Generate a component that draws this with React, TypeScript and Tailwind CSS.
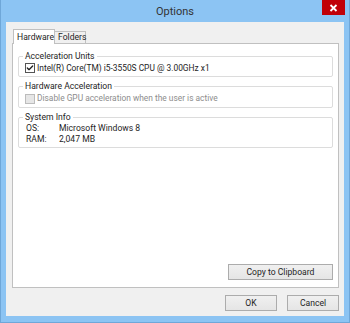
import { Check } from "lucide-react";

const font = { fontFamily: 'Roboto, "Open Sans", sans-serif' };

function GroupBox({ title, children }: { title: string; children: React.ReactNode }) {
  return (
    <fieldset className="rounded-[2px] border border-[#dcdcdc] px-[6px] pb-[2px]">
      <legend className="-ml-[2px] px-[2px] text-[8.6px] leading-[11px] text-[#1e1e1e]">
        {title}
      </legend>
      {children}
    </fieldset>
  );
}

function WinButton({ label, className }: { label: string; className: string }) {
  return (
    <button
      className={`flex items-center justify-center border border-[#acacac] bg-gradient-to-b from-[#f0f0f0] to-[#e5e5e5] text-[8.6px] leading-none text-[#1e1e1e] ${className}`}
    >
      {label}
    </button>
  );
}

function CloseButton() {
  return (
    <div className="-mr-px flex h-[15px] w-[23px] items-center justify-center justify-self-end bg-red-700">
      <svg width="9" height="8" viewBox="0 0 9 8">
        <path d="M1.5 1 L7.5 7 M7.5 1 L1.5 7" stroke="#ffffff" strokeWidth="1.8" />
      </svg>
    </div>
  );
}

export default function App() {
  return (
    <div
      style={font}
      className="flex h-[323px] w-[350px] flex-col border border-t-0 border-[#6fa7d8] bg-[#8cc4f3] px-[5px] pb-[6px]"
    >
      {/* title bar */}
      <div className="grid h-[22px] grid-cols-[1fr_auto_1fr]">
        <div />
        <span className="self-center text-[11px] leading-none text-[#333]">Options</span>
        <CloseButton />
      </div>

      {/* client area */}
      <div className="flex flex-1 flex-col bg-[#f0f0f0] pb-[5px] pl-[6px] pr-[5px] pt-[7px]">
        {/* tabs */}
        <div className="relative z-10 flex h-[14px] items-end">
          <div className="-mb-px ml-px flex h-[15px] w-[42px] items-start border border-b-0 border-[#c0c0c0] bg-white pl-[3px] pt-px text-[8.6px] leading-[12px] text-[#1e1e1e]">
            Hardware
          </div>
          <div className="flex h-[12px] w-[31px] items-center border border-b-0 border-l-0 border-[#c0c0c0] bg-[#f0f0f0] pl-[3px] text-[8.6px] leading-none text-[#1e1e1e]">
            Folders
          </div>
        </div>

        {/* tab panel */}
        <div className="flex flex-1 flex-col border border-[#c0c0c0] bg-white px-[5px] pb-[7px] pt-[7px]">
          <div className="flex flex-col gap-[4px]">
            <GroupBox title="Acceleration Units">
              <div className="flex h-[12px] items-center gap-[2px]">
                <span className="flex h-[10px] w-[10px] items-center justify-center border border-[#555] bg-white">
                  <Check size={8} strokeWidth={4} className="text-[#222]" />
                </span>
                <span className="text-[8.4px] text-[#1e1e1e]">Intel(R) Core(TM) i5-3550S CPU @ 3.00GHz x1</span>
              </div>
            </GroupBox>
            <GroupBox title="Hardware Acceleration">
              <div className="flex h-[13px] items-center gap-[2px]">
                <span className="h-[10px] w-[10px] border border-[#bcbcbc] bg-[#e6e6e6]" />
                <span className="text-[8.4px] text-[#8d8d8d]">Disable GPU acceleration when the user is active</span>
              </div>
            </GroupBox>
            <GroupBox title="System Info">
              <div className="grid grid-cols-[33px_1fr] pl-px text-[8.6px] leading-[11px] text-[#1e1e1e]">
                <span>OS:</span>
                <span>Microsoft Windows 8</span>
                <span>RAM:</span>
                <span>2,047 MB</span>
              </div>
            </GroupBox>
          </div>
          <div className="flex-1" />
          <div className="flex justify-end">
            <WinButton label="Copy to Clipboard" className="h-[16px] w-[105px]" />
          </div>
        </div>

        {/* dialog buttons */}
        <div className="mt-[7px] flex justify-end gap-[10px]">
          <WinButton label="OK" className="h-[16px] w-[52px]" />
          <WinButton label="Cancel" className="h-[16px] w-[52px]" />
        </div>
      </div>
    </div>
  );
}
